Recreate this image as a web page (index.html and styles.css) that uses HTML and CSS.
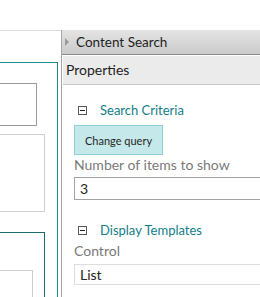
FILE: index.html
```html
<!DOCTYPE html>
<html>
<head>
<meta charset="utf-8">
<link rel="stylesheet" href="styles.css">
</head>
<body>
<div class="page">
  <div class="canvas">
    <div class="zone zone-teal">
      <div class="box box-dark"></div>
      <div class="box box-light"></div>
      <div class="zone zone-deep">
        <div class="box box-inner"></div>
      </div>
    </div>
  </div>
  <div class="panel">
    <div class="panel-head">
      <span class="caret"></span>
      <span class="panel-title">Content Search</span>
    </div>
    <div class="props-bar">Properties</div>
    <div class="props">
      <div class="group-head first">
        <span class="toggle"></span>
        <span class="group-title">Search Criteria</span>
      </div>
      <button class="btn">Change query</button>
      <div class="label label-num">Number of items to show</div>
      <div class="field field-dark">3</div>
      <div class="group-head second">
        <span class="toggle"></span>
        <span class="group-title">Display Templates</span>
      </div>
      <div class="label label-ctrl">Control</div>
      <div class="field field-light">List</div>
    </div>
  </div>
</div>
</body>
</html>
```

FILE: styles.css
```css
html, body {
  margin: 0;
  padding: 0;
  background: #fff;
}
body {
  width: 260px;
  height: 297px;
  overflow: hidden;
  font-family: "Segoe UI", "Lato", "Noto Sans", sans-serif;
}
.page {
  display: flex;
  margin-top: 30px;
  height: 267px;
}
.canvas {
  width: 61px;
  flex: none;
  border-top: 1px solid #dcdcdc;
  box-sizing: border-box;
  overflow: hidden;
}
.zone {
  box-sizing: border-box;
}
.zone-teal {
  margin-top: 31px;
  width: 58px;
  height: 240px;
  border-top: 1px solid #1f8c8f;
  border-right: 1px solid #1f8c8f;
  padding-top: 20px;
}
.box {
  box-sizing: border-box;
}
.box-dark {
  width: 37px;
  height: 43px;
  border: 1px solid #9a9a9a;
  border-left: none;
}
.box-light {
  margin-top: 8px;
  width: 45px;
  height: 78px;
  border: 1px solid #cfcfcf;
  border-left: none;
}
.zone-deep {
  margin-top: 20px;
  width: 45px;
  height: 80px;
  border-top: 1px solid #1d6b6b;
  border-right: 1px solid #1d6b6b;
  padding-top: 37px;
}
.box-inner {
  width: 33px;
  height: 40px;
  border-top: 1px solid #cccccc;
  border-right: 1px solid #cccccc;
}
.panel {
  flex: 1;
  border-left: 1px solid #a6a6a6;
  min-width: 0;
  overflow: hidden;
}
.panel-head {
  height: 24px;
  border-bottom: 1px solid #8c8c8c;
  background: linear-gradient(#e4e4e4, #cacaca);
  display: flex;
  align-items: center;
  padding-left: 3px;
  font-size: 13.5px;
  color: #1e1e1e;
}
.caret {
  width: 0;
  height: 0;
  border-top: 4px solid transparent;
  border-bottom: 4px solid transparent;
  border-left: 4px solid #9a9a9a;
  margin-right: 7px;
}
.panel-title {
  line-height: 16px;
}
.props-bar {
  margin: 1px 0 0 1px;
  border-bottom: 1px solid #c6c6c6;
  background: #ebebeb;
  font-size: 14px;
  color: #1e1e1e;
  line-height: 28px;
  padding-left: 3px;
  box-sizing: border-box;
  height: 29px;
}
.props {
  padding-left: 12px;
  display: flex;
  flex-direction: column;
  align-items: flex-start;
}
.group-head {
  display: flex;
  align-items: center;
  height: 16px;
}
.group-head.first {
  margin-top: 17px;
}
.group-head.second {
  margin-top: 22px;
}
.toggle {
  width: 9px;
  height: 9px;
  box-sizing: border-box;
  border: 1px solid #5a5a5a;
  margin-left: 4px;
  margin-right: 13px;
  position: relative;
}
.toggle::after {
  content: "";
  position: absolute;
  left: 1px;
  right: 1px;
  top: 3px;
  height: 1px;
  background: #222;
}
.group-title {
  font-size: 13px;
  color: #127d87;
}
.btn {
  margin-top: 7px;
  width: 89px;
  height: 30px;
  border: 1px solid #8fd2d5;
  background: #c5e8ea;
  font-family: inherit;
  font-size: 11px;
  color: #262626;
  padding: 0;
  cursor: pointer;
}
.label {
  font-size: 14px;
  color: #7a7a7a;
  line-height: 16px;
}
.label-num {
  margin-top: 2px;
}
.label-ctrl {
  margin-top: 5px;
}
.field {
  width: calc(100% + 20px);
  box-sizing: border-box;
  font-size: 14px;
  color: #222;
  padding-left: 5px;
}
.field-dark {
  margin-top: 4px;
  height: 23px;
  line-height: 21px;
  border: 1px solid #a3a3a3;
}
.field-light {
  margin-top: 5px;
  height: 21px;
  line-height: 19px;
  border: 1px solid #dedede;
}
```
